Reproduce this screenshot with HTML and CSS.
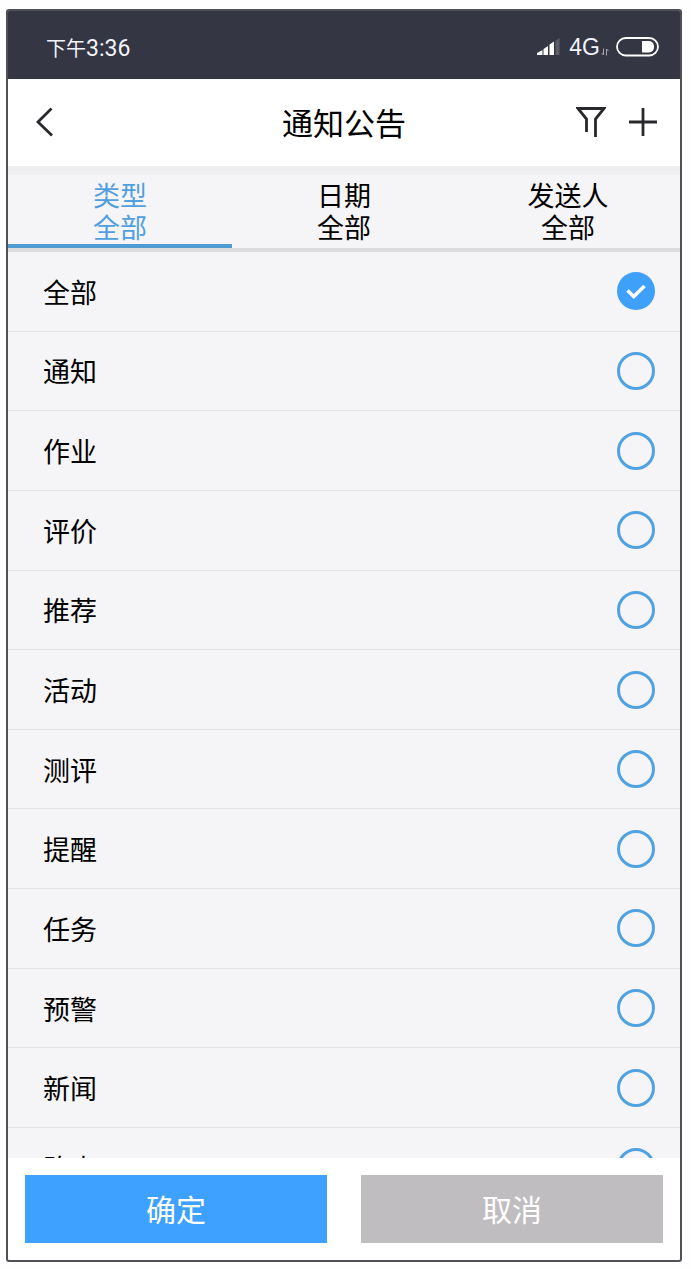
FILE: index.html
```html
<!DOCTYPE html>
<html lang="zh-CN">
<head>
    <meta charset="UTF-8">
    <meta name="viewport" content="width=device-width, initial-scale=1.0">
    <title>通知公告</title>
    <link rel="stylesheet" href="styles.css">
</head>
<body>
    <div class="phone">
        <div class="status-bar">
            <span class="time">下午<span class="digits">3:36</span></span>
            <svg class="signal" width="23" height="18" viewBox="0 0 23 18">
                <path d="M0 17V15L5.500 12V17ZM6.500 17V11L11 8V17ZM12.500 17V6.500L17 3.500V17Z" fill="#fff"/>
                <path d="M18.500 17V3L22.500 0V17Z" fill="#5b5d69"/>
            </svg>
            <span class="network">4G</span>
            <svg class="arrows" width="8" height="8" viewBox="0 0 8 8" fill="none" stroke="#a6a7b0">
                <path d="M2.500 0.500V7L0.500 5M5.500 7.500V1L7.500 3"/>
            </svg>
            <svg class="battery" width="43" height="20" viewBox="0 0 43 20">
                <rect x="1" y="1" width="41" height="17.500" rx="8.750" fill="none" stroke="#fff" stroke-width="1.800"/>
                <path d="M26 4H33A5.800 5.800 0 0 1 33 15.500H26Z" fill="#fff"/>
            </svg>
        </div>

        <div class="header">
            <svg class="back" width="18" height="30" viewBox="0 0 18 30">
                <path d="M15.500 1.500L2 15L16 28.500"/>
            </svg>
            <h1>通知公告</h1>
            <div class="actions">
                <svg width="30" height="32" viewBox="0 0 30 32">
                    <path d="M10.500 26V13L2 2.500H28L19.500 13V31"/>
                </svg>
                <svg width="30" height="30" viewBox="0 0 30 30">
                    <path d="M15 1V29M1 15H29"/>
                </svg>
            </div>
        </div>

        <div class="tabs">
            <div class="tab active">类型<br>全部</div>
            <div class="tab">日期<br>全部</div>
            <div class="tab">发送人<br>全部</div>
        </div>

        <div class="list">
            <div class="row"><span>全部</span>
                <svg class="checked" width="38" height="38" viewBox="0 0 38 38">
                    <circle cx="19" cy="19" r="19"/>
                    <path d="M10.500 18.500L16.800 24.500L27.500 14"/>
                </svg>
            </div>
            <div class="row"><span>通知</span><i class="radio"></i></div>
            <div class="row"><span>作业</span><i class="radio"></i></div>
            <div class="row"><span>评价</span><i class="radio"></i></div>
            <div class="row"><span>推荐</span><i class="radio"></i></div>
            <div class="row"><span>活动</span><i class="radio"></i></div>
            <div class="row"><span>测评</span><i class="radio"></i></div>
            <div class="row"><span>提醒</span><i class="radio"></i></div>
            <div class="row"><span>任务</span><i class="radio"></i></div>
            <div class="row"><span>预警</span><i class="radio"></i></div>
            <div class="row"><span>新闻</span><i class="radio"></i></div>
            <div class="row"><span>路由</span><i class="radio"></i></div>
        </div>

        <div class="footer">
            <button class="confirm">确定</button>
            <button class="cancel">取消</button>
        </div>
    </div>
</body>
</html>
```

FILE: styles.css
```css
* {
    box-sizing: border-box;
}
body {
    margin: 0;
    padding: 9px 9px 7px 6px;
    height: 1269px;
    background: #fefefe;
    font-family: "Noto Sans CJK SC", sans-serif;
    color: #000;
    overflow: hidden;
}
.phone {
    display: flex;
    flex-direction: column;
    height: 1253px;
    border: 2px solid #505057;
    border-radius: 3px;
    background: #fff;
    overflow: hidden;
}
.status-bar {
    display: flex;
    align-items: center;
    flex: none;
    height: 68px;
    padding: 5px 21px 0 38px;
    background: #343643;
    color: #f2f4fb;
    font-size: 20px;
}
.time {
    margin-right: auto;
}
.digits {
    font-family: Roboto, sans-serif;
    font-size: 23px;
}
.signal {
    margin: 0 9px 2px 0;
}
.network {
    font-family: "Liberation Sans", sans-serif;
    font-size: 23px;
}
.arrows {
    margin: 8px 7px 0 1px;
}
.battery {
    margin-bottom: 1px;
}
.header {
    display: flex;
    align-items: center;
    justify-content: space-between;
    flex: none;
    height: 87px;
    padding: 0 22px 2px 28px;
}
.header svg {
    fill: none;
    stroke: #29292d;
    stroke-width: 2.8;
}
.back {
    margin-right: 58px;
}
h1 {
    margin: 0;
    font-size: 31px;
    font-weight: 400;
}
.actions {
    display: flex;
    align-items: center;
    gap: 22px;
}
.tabs {
    display: flex;
    flex: none;
    height: 86px;
    border-top: 9px solid #efeef1;
    border-bottom: 4px solid #dcdbde;
    background: #f5f4f6;
}
.tab {
    flex: 1;
    padding-top: 4px;
    font-size: 27px;
    line-height: 32px;
    text-align: center;
}
.active {
    color: #519fdf;
    border-bottom: 4px solid #519bd5;
}
.list {
    flex: 1;
    min-height: 0;
    overflow: hidden;
    background: #f5f4f6;
}
.row {
    display: flex;
    align-items: center;
    justify-content: space-between;
    height: 79.65px;
    padding: 0 25px 0 35px;
    border-bottom: 1px solid #e3e2e5;
    font-size: 27px;
}
.radio {
    width: 38px;
    height: 38px;
    border: 3px solid #50a2e0;
    border-radius: 50%;
}
.checked circle {
    fill: #3fa0fa;
}
.checked path {
    fill: none;
    stroke: #fff;
    stroke-width: 3.5;
}
.footer {
    display: flex;
    justify-content: space-between;
    flex: none;
    height: 102px;
    padding: 17px;
}
button {
    width: 302px;
    height: 68px;
    padding: 0 0 2px;
    border: none;
    color: #fff;
    font-family: inherit;
    font-size: 30px;
}
.confirm {
    background: #3ea1ff;
}
.cancel {
    background: #bfbdc0;
}
```
